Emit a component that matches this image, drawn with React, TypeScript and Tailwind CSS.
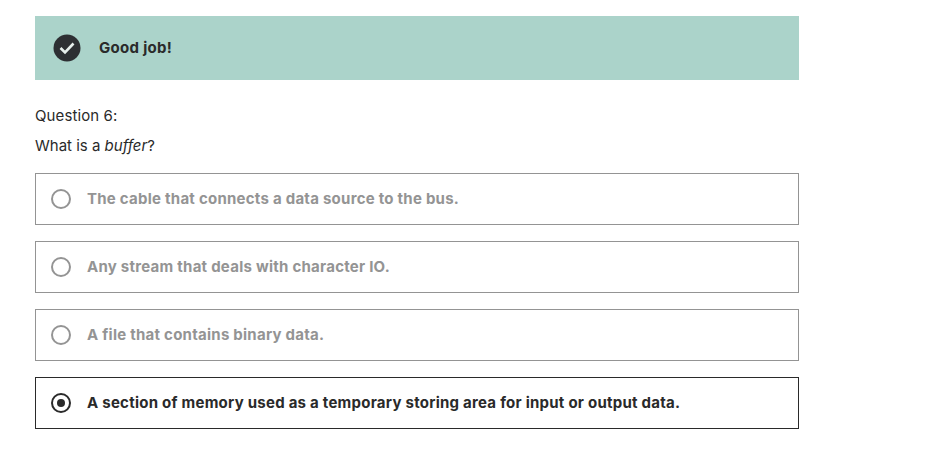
import React from "react";

const options = [
  "The cable that connects a data source to the bus.",
  "Any stream that deals with character IO.",
  "A file that contains binary data.",
  "A section of memory used as a temporary storing area for input or output data.",
];

export default function App() {
  return (
    <div className="h-[461px] w-[936px] overflow-hidden bg-white pt-4 pl-[35px] font-['Inter',sans-serif] text-[#2a2a2a]">
      <div className="w-[764px]">
        <div className="flex h-16 items-center gap-[18px] bg-[#abd3ca] pl-[18px]">
          <svg width="28" height="28" viewBox="0 0 28 28">
            <circle cx="14" cy="14" r="13.5" fill="#2d2f33" />
            <path d="M7.5 14l4.5 4.5 8.5-9" fill="none" stroke="#e6eeec" strokeWidth="2.6" />
          </svg>
          <span className="text-[15px] font-bold tracking-[0.3px]">Good job!</span>
        </div>
        <p className="mt-[26px] text-[15px] leading-5 tracking-[0.1px]">Question 6:</p>
        <p className="mt-2.5 text-[15px] leading-5">
          What is a <em>buffer</em>?
        </p>
        <div className="mt-[17px] flex flex-col gap-4">
          {options.map((text, i) => {
            const selected = i === 3;
            return (
              <div
                key={text}
                className={`flex h-[52px] items-center gap-4 border pl-[15px] ${selected ? "border-[#2a2a2a]" : "border-[#949494]"}`}
              >
                <span
                  className={`flex h-5 w-5 items-center justify-center rounded-full border-2 ${selected ? "border-[#2a2a2a]" : "border-[#949494]"}`}
                >
                  {selected && <span className="h-2 w-2 rounded-full bg-[#2a2a2a]" />}
                </span>
                <span className={`text-[15px] font-bold tracking-[0.25px] ${selected ? "text-[#2a2a2a]" : "text-[#949494]"}`}>{text}</span>
              </div>
            );
          })}
        </div>
      </div>
    </div>
  );
}
